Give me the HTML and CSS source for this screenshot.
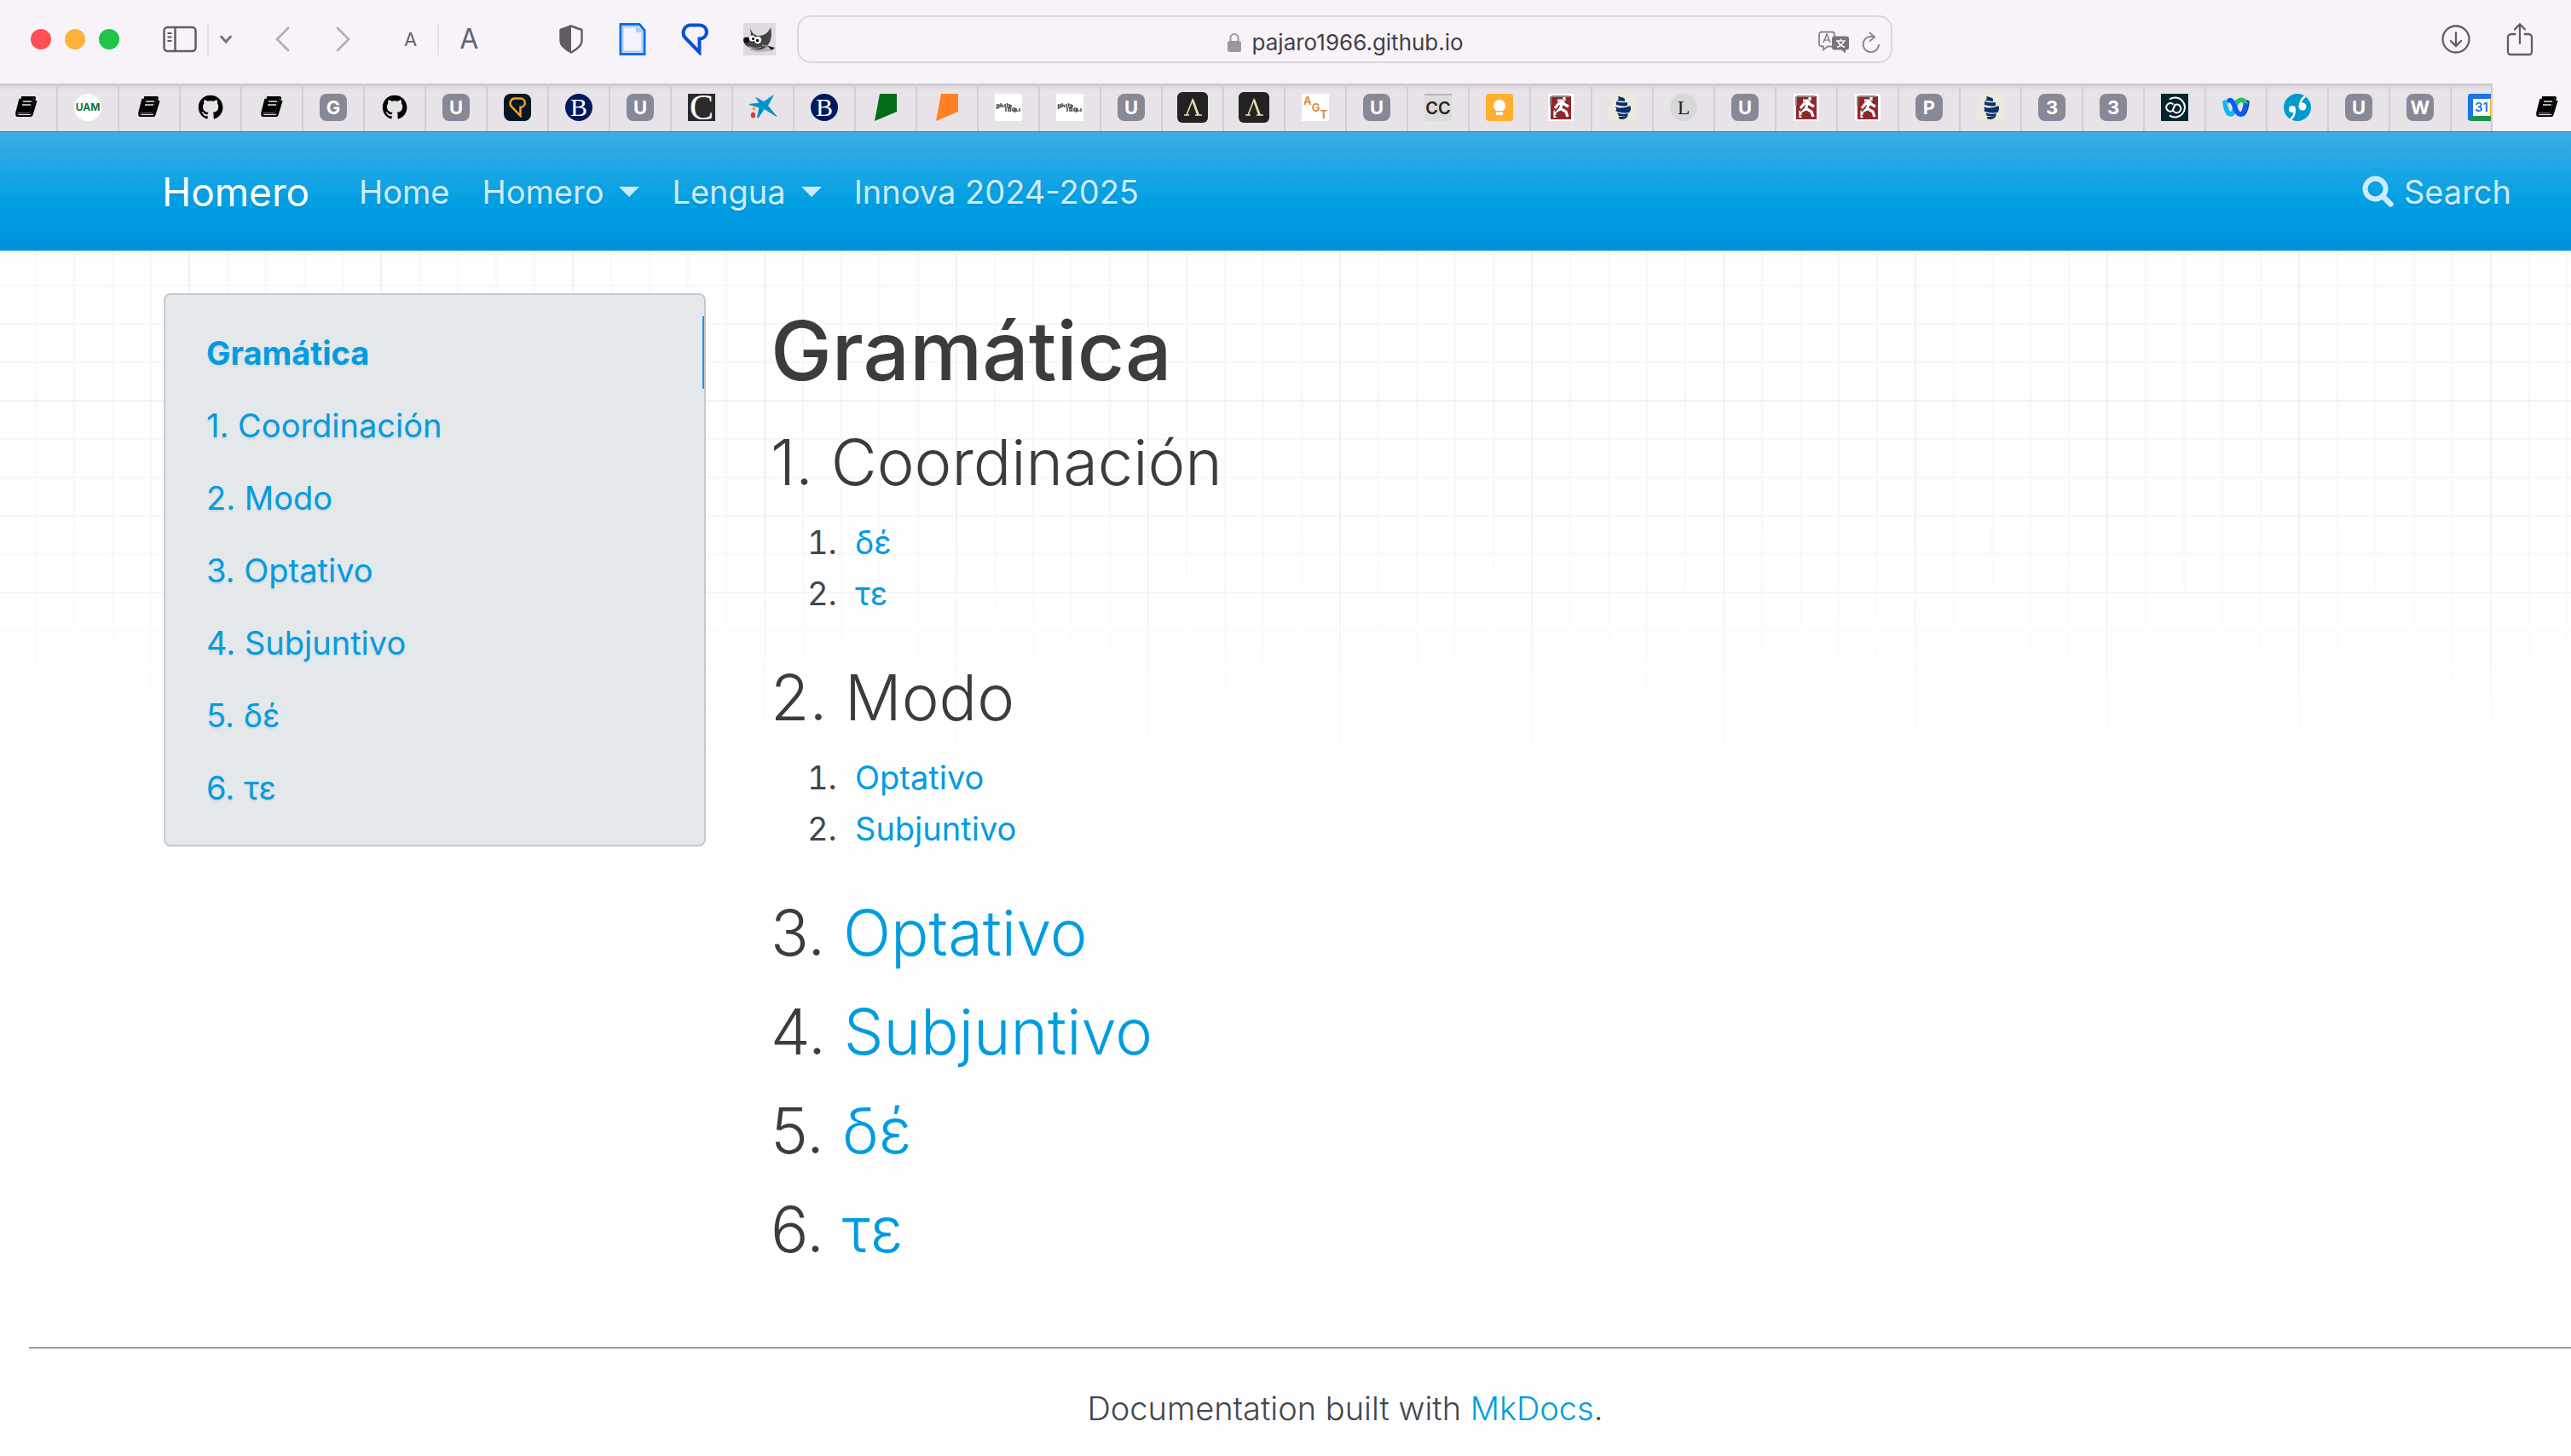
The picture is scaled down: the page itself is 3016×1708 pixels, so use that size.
FILE: index.html
```html
<!DOCTYPE html>
<html lang="es">
<head>
<meta charset="utf-8">
<meta name="viewport" content="width=device-width, initial-scale=1">
<title>Gramática - Homero</title>
<link rel="stylesheet" href="styles.css">
</head>
<body>
<svg class="sprite" aria-hidden="true">
  <symbol id="book" viewBox="0 0 32 32"><path d="M10 4h15c1 0 1 1 .8 1.600L21 22c-.3 1-1 1.500-2 1.500H5.500c-1.500 0-1.500 2.500 0 2.500H20.500c1 0 1.600-.5 2-1.500L27.500 8M4 23.500 8.500 6" fill="none" stroke="#000" stroke-width="2.200"/><path d="M10 4h15L20 22H4z"/><path d="M12 9h10M11 13h10" stroke="#e8e3e9" stroke-width="1.600"/><path d="M7 24.500h13.500" stroke="#e8e3e9" stroke-width="1.200"/></symbol>
  <symbol id="github" viewBox="0 0 16 16"><path d="M8 .9C3.900.9.9 4 .9 8c0 3.200 2 5.800 4.900 6.700.4.100.5-.2.500-.4v-1.300c-2 .4-2.500-.9-2.500-.9-.3-.8-.8-1-.8-1-.7-.5.1-.5.1-.5.700.1 1.100.8 1.100.8.700 1.100 1.700.8 2.100.6.100-.5.300-.8.500-1C5.200 10.800 3.500 10.200 3.500 7.500c0-.8.300-1.400.7-1.900-.1-.2-.3-.9.100-1.900 0 0 .6-.2 2 .7a7 7 0 0 1 3.500 0c1.400-.9 2-.7 2-.7.400 1 .1 1.700.1 1.900.5.500.7 1.100.7 1.900 0 2.700-1.700 3.300-3.300 3.500.3.200.5.700.5 1.400v1.900c0 .2.100.5.500.4 2.900-.9 4.900-3.500 4.900-6.700C15.100 4 12.100.9 8 .9z"/></symbol>
  <symbol id="pin" viewBox="0 0 32 38"><path d="M10 2.500h12a8 8 0 0 1 0 16h-.5v16L5 17.500A9 9 0 0 1 10 2.500z" fill="none" stroke="currentColor" stroke-width="4"/></symbol>
  <symbol id="star" viewBox="0 0 32 32"><path d="M28 2 21.500 14 32 26.500 17.500 17.500 10.500 28 9.500 27.500 12 16 0 12.500 12 11 8 4.500 17 9.500z" fill="#0093c4" stroke="#0093c4" stroke-linejoin="round"/><circle cx="5.500" cy="17.500" r="2" fill="#f6a845"/><ellipse cx="4.500" cy="25" rx="2.700" ry="3.600" fill="#e2383f"/></symbol>
  <symbol id="philo" viewBox="0 0 32 32"><path d="M0 0h32v32H0z" fill="#fff"/><g fill="none" stroke="#555" stroke-width="1.600"><path d="M2.500 18v-5h2.500v3h-2M7 11v5M7 13.500h2.500V16M12 12v4M14.500 11v5M14.500 16h3v-3h-2M13 16v5M16 17h2.500v3H16zM21 17h2.500v5M21 17v3h2M25 17v3h2.500M29 17v4M19 13v3"/></g></symbol>
  <symbol id="runner" viewBox="0 0 32 32"><path d="M1 0h30v32H1z" fill="#fff"/><path d="M4 3h24v27H4z" fill="#98242a"/><path d="M5 3h21M4 3v11" stroke="#8a8a88" stroke-width="2"/><path d="M20 4v5l-7 3-4 5M18 10l-3 8-6 3v7M15 17l7 4 2 6M18 11l7 4M12 8h6" fill="none" stroke="#fff" stroke-width="3.200"/><path d="M13 16l-4 5M20 8l3 3M16 21l3 4M9 25l3 2" stroke="#444" stroke-width="1.500"/></symbol>
  <symbol id="ship" viewBox="0 0 32 32"><path d="M0 0h32v32H0z" fill="#ebe9dd"/><path d="M11 3c4 1 6 1 8 3v3l-9-1c2-1 2-3 1-5zM9 9c6 2 9 1 13 1v4c-4 1-9 0-13-1zM8 15c6 3 13 1 17-1 2 3 1 6-1 8-6 1-12 0-16-2 2-1 1-3 0-5zM10 22c4 2 9 2 13 1l-1 4-10-1zM12 27h10c-2 3-7 4-10 2z" fill="#08306b"/></symbol>
  <symbol id="lambda" viewBox="0 0 36 36"><rect width="36" height="36" rx="6" fill="#222"/><path d="M8 27h6M21 27h8M11 27 18 9l7 18" fill="none" stroke="#ecdcae" stroke-width="1.600"/><path d="M18 9l6.500 18" stroke="#ecdcae" stroke-width="2.600"/></symbol>
</svg>

<header class="browser">
  <div class="toolbar">
    <div class="lights"><i class="red"></i><i class="amber"></i><i class="green"></i></div>
    <div class="side-tools">
      <button aria-label="Sidebar"><svg width="40" height="32" fill="none" stroke="#625c65" stroke-width="2.500"><rect x="1.500" y="2" width="37" height="28" rx="4"/><path d="M14.500 2v28"/><path d="M5.500 9h5M5.500 13.500h5M5.500 18h5" stroke-width="2"/></svg></button>
      <span class="rule"></span>
      <button aria-label="Tab groups"><svg width="16" height="12" fill="none" stroke="#79727c" stroke-width="3" stroke-linecap="round"><path d="M2.500 3 8 9l5.500-6"/></svg></button>
    </div>
    <div class="history">
      <button aria-label="Back"><svg width="18" height="30" fill="none" stroke="#b1abb4" stroke-width="2.600" stroke-linecap="round"><path d="M16 2 3 15l13 13"/></svg></button>
      <button aria-label="Forward"><svg width="18" height="30" fill="none" stroke="#b1abb4" stroke-width="2.600" stroke-linecap="round"><path d="M2 2l13 13L2 28"/></svg></button>
    </div>
    <div class="text-size">
      <button class="smaller">A</button><span class="rule"></span><button class="larger">A</button>
    </div>
    <div class="extensions">
      <button aria-label="Privacy report"><svg width="30" height="34" viewBox="0 0 30 34"><path d="M15 1.500 27.500 6v13c0 6-6 10-12.500 13.500C8.500 29 2.500 25 2.500 19V6z" fill="none" stroke="#625c65" stroke-width="2.400" stroke-linejoin="round"/><path d="M15 1.500V32.500C8.500 29 2.500 25 2.500 19V6z" fill="#625c65"/></svg></button>
      <button aria-label="Notes"><svg width="32" height="38"><path d="M2 1.500h22l6 7v28H2z" fill="#f4f3fb" stroke="#0a6fe8" stroke-width="3"/><path d="M4.500 4.500h17l6 6v23h-23z" fill="none" stroke="#a9cdf8" stroke-width="2"/><path d="M20 3v8h8" fill="#a9cdf8"/></svg></button>
      <button aria-label="Pin" class="pin-blue"><svg width="32" height="38"><use href="#pin"/></svg></button>
      <button aria-label="Gimp"><svg width="38" height="38"><path d="M0 0h38v38H0z" fill="#dfdae1"/><ellipse cx="20" cy="31" rx="13" ry="3" fill="#b9b5bb"/><path d="M8 6c2 6 5 8 9 9 7 0 12-3 15-10 2 8 1 17-5 23-6 5-14 4-18 1-5-1-9-4-8-9 1-3 4-2 7-4 2-4 0-6 0-10z" fill="#444"/><circle cx="3.500" cy="20" r="3.500" fill="#111"/><circle cx="10.500" cy="18" r="3.600" fill="#fff"/><circle cx="17" cy="20" r="4.200" fill="#fff"/><circle cx="11.500" cy="18.500" r="1.500"/><circle cx="16.500" cy="20.500" r="1.700"/><path d="M22 26l9 2" stroke="#888" stroke-width="2"/><path d="M29 27l8 2-4 3z" fill="#111"/><path d="M6 27c5 3 11 3 15 1" stroke="#aaa" fill="none"/></svg></button>
    </div>
    <div class="address">
      <span class="url"><svg width="18" height="24"><rect x="1" y="10" width="16" height="13" rx="2.500" fill="#9c979e"/><path d="M4.500 11V6.500a4.500 4.500 0 0 1 9 0V11" fill="none" stroke="#9c979e" stroke-width="2"/></svg>pajaro1966.github.io</span>
      <span class="address-tools">
        <button aria-label="Translate"><svg width="38" height="28"><path d="M5 1.500h12a3 3 0 0 1 3 3v11a3 3 0 0 1-3 3h-5l-5 4v-4H5a3 3 0 0 1-3-3v-11a3 3 0 0 1 3-3z" fill="none" stroke="#8a858c" stroke-width="1.800"/><path d="M7 14l4-10 4 10M8.500 11h5" fill="none" stroke="#8a858c" stroke-width="1.600"/><path d="M20 6.500h14a3 3 0 0 1 3 3v10a3 3 0 0 1-3 3h-1v4l-5-4h-8a3 3 0 0 1-3-3v-10a3 3 0 0 1 3-3z" fill="#79747b"/><path d="M22 12h11M27.500 9.500V12M31 12c-1 4-4 6-8 7.500M24 12c1 4 4 6 8 7.500" fill="none" stroke="#f8f3f9" stroke-width="1.700"/></svg></button>
        <button aria-label="Reload"><svg width="22" height="26" fill="none" stroke="#8a858c" stroke-width="1.900"><path d="M13 6A9.200 9.200 0 1 0 20 15"/><path d="M9 1l6 5.500-6 5"/></svg></button>
      </span>
    </div>
    <div class="right-tools">
      <button aria-label="Downloads"><svg width="34" height="34" fill="none" stroke="#625c65" stroke-width="2.300" stroke-linecap="round"><circle cx="17" cy="17" r="15.500"/><path d="M17 9.500v15M11 19l6 6 6-6"/></svg></button>
      <button aria-label="Share"><svg width="32" height="40" fill="none" stroke="#625c65" stroke-width="2.300" stroke-linecap="round"><path d="M10.500 14H6a4 4 0 0 0-4 4v17a3 3 0 0 0 3 3h22a3 3 0 0 0 3-3V18a4 4 0 0 0-4-4h-4.500M16 25V3M10 8.500 16 2.500l6 6"/></svg></button>
    </div>
  </div>

  <nav class="tabs" aria-label="Tabs">
    <div class="strip">
      <button class="tab" aria-label="Docs"><svg class="fav"><use href="#book"/></svg></button>
      <button class="tab"><span class="fav uam">UAM</span></button>
      <button class="tab" aria-label="Docs"><svg class="fav"><use href="#book"/></svg></button>
      <button class="tab" aria-label="GitHub"><svg class="fav"><use href="#github"/></svg></button>
      <button class="tab" aria-label="Docs"><svg class="fav"><use href="#book"/></svg></button>
      <button class="tab"><span class="fav letter">G</span></button>
      <button class="tab" aria-label="GitHub"><svg class="fav"><use href="#github"/></svg></button>
      <button class="tab"><span class="fav letter">U</span></button>
      <button class="tab" aria-label="Pin"><span class="fav pin-gold"><svg width="22" height="24"><use href="#pin"/></svg></span></button>
      <button class="tab"><span class="fav blue-b">B</span></button>
      <button class="tab"><span class="fav letter">U</span></button>
      <button class="tab"><span class="fav big-c">C</span></button>
      <button class="tab" aria-label="Star"><svg class="fav"><use href="#star"/></svg></button>
      <button class="tab"><span class="fav blue-b">B</span></button>
      <button class="tab" aria-label="Green"><svg class="fav" viewBox="0 0 32 32"><path d="M9 0h20v21L3 32z" fill="#006f1b"/></svg></button>
      <button class="tab" aria-label="Orange"><svg class="fav" viewBox="0 0 32 32"><path d="M9 0h20v21L3 32z" fill="#ff8124"/></svg></button>
      <button class="tab" aria-label="Philology"><svg class="fav"><use href="#philo"/></svg></button>
      <button class="tab" aria-label="Philology"><svg class="fav"><use href="#philo"/></svg></button>
      <button class="tab"><span class="fav letter">U</span></button>
      <button class="tab" aria-label="Lambda"><svg class="fav fav-large"><use href="#lambda"/></svg></button>
      <button class="tab" aria-label="Lambda"><svg class="fav fav-large"><use href="#lambda"/></svg></button>
      <button class="tab"><span class="fav agt"><b>A</b><b>G</b><b>T</b></span></button>
      <button class="tab"><span class="fav letter">U</span></button>
      <button class="tab"><span class="fav cc">CC</span></button>
      <button class="tab" aria-label="Keep"><svg class="fav" viewBox="0 0 32 32"><rect width="32" height="32" rx="4" fill="#ffb02e"/><path d="M16 7a7 7 0 0 0-4 12.700V20h8v-.3A7 7 0 0 0 16 7zM12 21.500h8V25h-8z" fill="#fff"/></svg></button>
      <button class="tab" aria-label="Runner"><svg class="fav"><use href="#runner"/></svg></button>
      <button class="tab" aria-label="Ship"><svg class="fav"><use href="#ship"/></svg></button>
      <button class="tab"><span class="fav round-l">L</span></button>
      <button class="tab"><span class="fav letter">U</span></button>
      <button class="tab" aria-label="Runner"><svg class="fav"><use href="#runner"/></svg></button>
      <button class="tab" aria-label="Runner"><svg class="fav"><use href="#runner"/></svg></button>
      <button class="tab"><span class="fav letter">P</span></button>
      <button class="tab" aria-label="Ship"><svg class="fav"><use href="#ship"/></svg></button>
      <button class="tab"><span class="fav letter">3</span></button>
      <button class="tab"><span class="fav letter">3</span></button>
      <button class="tab" aria-label="Loop"><svg class="fav" viewBox="0 0 32 32"><path d="M0 0h32v32H0z" fill="#04252f"/><path d="M10 6.500a11.500 11.500 0 1 1 0 19" fill="none" stroke="#fff" stroke-width="2"/><path d="M14.500 12.500a4.800 4.800 0 1 0-1 7.500l3-7a4.800 4.800 0 1 1-2 7" fill="none" stroke="#fff" stroke-width="2"/></svg></button>
      <button class="tab" aria-label="Webex"><svg class="fav" viewBox="0 0 32 32" fill="none" stroke-width="5.500" stroke-linecap="round"><path d="M29 10c-1 9-4 14-7 14" stroke="#0a45b5"/><path d="M16 11c4-5 9-5 11 0" stroke="#25c45a"/><path d="M3 10c1 9 4 14 7 14 3 0 4-5 6-12" stroke="#12b9ee"/><path d="M8 8c6-3 6 15 13 16 3 0 5-4 6-10" stroke="#0a5cf5"/></svg></button>
      <button class="tab" aria-label="Quotes"><svg class="fav" viewBox="0 0 32 32"><circle cx="16" cy="16" r="16" fill="#0099cb"/><circle cx="10" cy="18" r="4" fill="#fff"/><circle cx="22" cy="15" r="4.500" fill="#fff"/><path d="M13 18c0 6-1 9-5 12M19 15c0-6 2-9 6-12" fill="none" stroke="#fff" stroke-width="2.500"/></svg></button>
      <button class="tab"><span class="fav letter">U</span></button>
      <button class="tab"><span class="fav letter">W</span></button>
      <button class="tab"><span class="fav calendar"><span>31</span></span></button>
    </div>
    <button class="tab-active" aria-label="Gramática - Homero"><svg class="fav"><use href="#book"/></svg></button>
  </nav>
</header>

<nav class="navbar">
  <a class="brand" href="#">Homero</a>
  <ul class="menu">
    <li><a href="#">Home</a></li>
    <li><a class="dropdown" href="#">Homero</a></li>
    <li><a class="dropdown" href="#">Lengua</a></li>
    <li><a href="#">Innova 2024-2025</a></li>
  </ul>
  <a class="search" href="#"><svg width="37" height="37" fill="none" stroke="currentColor" stroke-width="6"><circle cx="15.500" cy="15.500" r="12"/><path d="M24 24l9.500 9.500" stroke-linecap="round" stroke-width="6.500"/></svg>Search</a>
</nav>

<div class="page">
  <div class="container">
    <aside class="toc">
      <a class="current" href="#gramatica">Gramática</a>
      <a href="#coordinacion">1. Coordinación</a>
      <a href="#modo">2. Modo</a>
      <a href="#optativo">3. Optativo</a>
      <a href="#subjuntivo">4. Subjuntivo</a>
      <a href="#de">5. δέ</a>
      <a href="#te">6. τε</a>
    </aside>
    <main class="content">
      <h1 id="gramatica">Gramática</h1>
      <h2 id="coordinacion">1. Coordinación</h2>
      <ol>
        <li><a href="#de">δέ</a></li>
        <li><a href="#te">τε</a></li>
      </ol>
      <h2 id="modo">2. Modo</h2>
      <ol>
        <li><a href="#optativo">Optativo</a></li>
        <li><a href="#subjuntivo">Subjuntivo</a></li>
      </ol>
      <h2 id="optativo">3. <a href="#">Optativo</a></h2>
      <h2 id="subjuntivo">4. <a href="#">Subjuntivo</a></h2>
      <h2 id="de">5. <a href="#">δέ</a></h2>
      <h2 id="te">6. <a href="#">τε</a></h2>
    </main>
  </div>
  <footer class="footer">
    <hr>
    <p>Documentation built with <a href="#">MkDocs</a>.</p>
  </footer>
</div>
</body>
</html>
```
FILE: styles.css
```css
* { box-sizing: border-box; }

body {
  margin: 0;
  background: #fefefe;
  color: #42474c;
  font-family: Inter, "Liberation Sans", sans-serif;
  font-size: 38px;
  line-height: 60px;
  overflow-x: hidden;
}

a { color: #009ce0; text-decoration: none; }

button {
  display: flex;
  align-items: center;
  justify-content: center;
  margin: 0;
  padding: 0;
  border: 0;
  background: none;
  font: inherit;
  color: inherit;
}

svg { display: block; flex: none; }
.sprite { position: absolute; width: 0; height: 0; }

/* Browser window */
.browser { background: #f8f3f9; }

.toolbar {
  display: flex;
  align-items: center;
  height: 98px;
  padding: 0 44px 6px 36px;
}

.lights { display: flex; gap: 16px; }
.lights i { width: 24px; height: 24px; border-radius: 50%; }
.red { background: #ff4f52; }
.amber { background: #ffb239; }
.green { background: #1fc449; }

.side-tools { display: flex; align-items: center; gap: 12px; margin-left: 51px; }
.rule { width: 2px; height: 38px; background: #e6e0e8; }
.history { display: flex; gap: 54px; margin-left: 49px; }

.text-size { display: flex; align-items: center; gap: 24px; margin-left: 62px; color: #67616a; }
.smaller, .larger { line-height: 40px; }
.smaller { font-size: 22px; }
.larger { font-size: 32px; }

.extensions { display: flex; align-items: center; gap: 41px; margin-left: 94px; }
.pin-blue { color: #0450d8; }

.address {
  display: grid;
  grid-template-columns: 1fr auto 1fr;
  align-items: center;
  flex: 1;
  height: 56px;
  margin-left: 25px;
  padding: 0 12px;
  border: 2px solid #dcd7de;
  border-radius: 16px;
}
.url { grid-column: 2; display: flex; align-items: center; gap: 12px; font-size: 26px; color: #444046; }
.address-tools { display: flex; align-items: center; justify-content: flex-end; gap: 14px; }

.right-tools { display: flex; align-items: center; gap: 42px; margin-left: 644px; }

.tabs { display: flex; height: 56px; }
.strip {
  display: flex;
  flex: 1;
  min-width: 0;
  overflow: hidden;
  padding-right: 2px;
  border-right: 2px solid #cfcad1;
  background: linear-gradient(#c3bec5, #dcd7dd 3px, #e8e3e9 8px);
}
.tab { flex: none; width: 72px; border-right: 2px solid #d3ced5; }
.tab:first-child { margin-left: -4px; }
.tab-active { width: 92px; padding-left: 36px; }

.fav {
  display: flex;
  align-items: center;
  justify-content: center;
  flex: none;
  width: 32px;
  height: 32px;
  line-height: 32px;
}
.fav-large { width: 36px; height: 36px; }
.letter { border-radius: 8px; background: #888896; color: #fff; font-size: 22px; font-weight: 700; }
.uam { border-radius: 50%; background: #fff; color: #1b7430; font-size: 12px; font-weight: 700; }
.pin-gold { border-radius: 8px; background: #061623; color: #f5a021; }
.blue-b { border-radius: 50%; background: #001a5e; color: #fff; font-family: "Liberation Serif", serif; font-size: 30px; }
.big-c { background: #2b2b2b; color: #fff; font-family: "Liberation Serif", serif; font-size: 42px; }
.agt { background: #fff; color: #e08a4c; font-size: 13px; line-height: 16px; }
.agt b:nth-child(1) { align-self: flex-start; }
.agt b:nth-child(3) { align-self: flex-end; }
.cc { border-top: 2px solid #b9b5bb; background: #dcdcdc; color: #222; font-size: 20px; font-weight: 600; }
.round-l { border-radius: 50%; background: #d8d8d8; color: #222; font-family: "Liberation Serif", serif; font-size: 24px; }
.calendar {
  border: 6px solid #1a73e8;
  border-right-color: #fbbc04;
  border-bottom-color: #1e9447;
  border-radius: 4px;
  background: #fff;
  color: #1a73e8;
  font-size: 15px;
  font-weight: 600;
}

/* Site navigation */
.navbar {
  display: flex;
  align-items: center;
  height: 140px;
  padding: 0 70px 0 190px;
  border-top: 1px solid #1583bd;
  background: linear-gradient(#3cade5, #009fe3 60%, #0090db);
  text-shadow: 0 2px 2px rgba(0, 0, 0, .1);
}
.navbar a { color: #cdebf9; }
.navbar .brand { color: #fff; font-size: 46px; }
.menu { display: flex; gap: 38px; margin: 0 0 0 58px; padding: 0; list-style: none; }
.menu a, .search { display: flex; align-items: center; }
.dropdown::after {
  content: "";
  margin-left: 18px;
  border: 12px solid transparent;
  border-top-color: currentColor;
  border-bottom: 0;
}
.search { gap: 12px; margin-left: auto; }

/* Page with a fading grid-paper background */
.page {
  background:
    linear-gradient(rgba(254, 254, 254, 0) 300px, #fefefe 640px),
    linear-gradient(90deg, #f1f1f1 2px, transparent 2px) 221px 0 / 225px 225px,
    linear-gradient(#f1f1f1 2px, transparent 2px) 0 175px / 225px 225px,
    linear-gradient(90deg, #f8f8f8 2px, transparent 2px) 41px 0 / 45px 45px,
    linear-gradient(#f8f8f8 2px, transparent 2px) 0 40px / 45px 45px;
}
.container {
  display: grid;
  grid-template-columns: 636px 1fr;
  gap: 76px;
  align-items: start;
  padding: 50px 192px 0;
}

.toc {
  display: flex;
  flex-direction: column;
  padding: 25px 0;
  border: 2px solid #c6cacd;
  border-radius: 8px;
  background: #e4e8eb;
  text-shadow: 0 2px 2px rgba(0, 0, 0, .08);
}
.toc a { padding: 13px 48px 12px; }
.toc .current { border-right: 2px solid #009ce0; font-weight: 700; }

.content { padding-top: 6px; }
h1, h2 { margin: 0; color: #3c3c3c; }
h1 { margin-bottom: 22px; font-size: 96px; line-height: 122px; font-weight: 500; }
h2 { margin-bottom: 20px; font-size: 74px; line-height: 96px; font-weight: 350; }
ol { margin: -4px 0 44px; padding-left: 88px; }
li::marker { color: #42474c; }
ol li { padding-left: 11px; }

.footer { padding: 70px 0 27px 34px; margin-right: -106px; text-align: center; font-weight: 300; }
hr { margin: 0 0 40px; border: 0; border-top: 2px solid #9a9e9d; }
.footer p { margin: 0; }
```
